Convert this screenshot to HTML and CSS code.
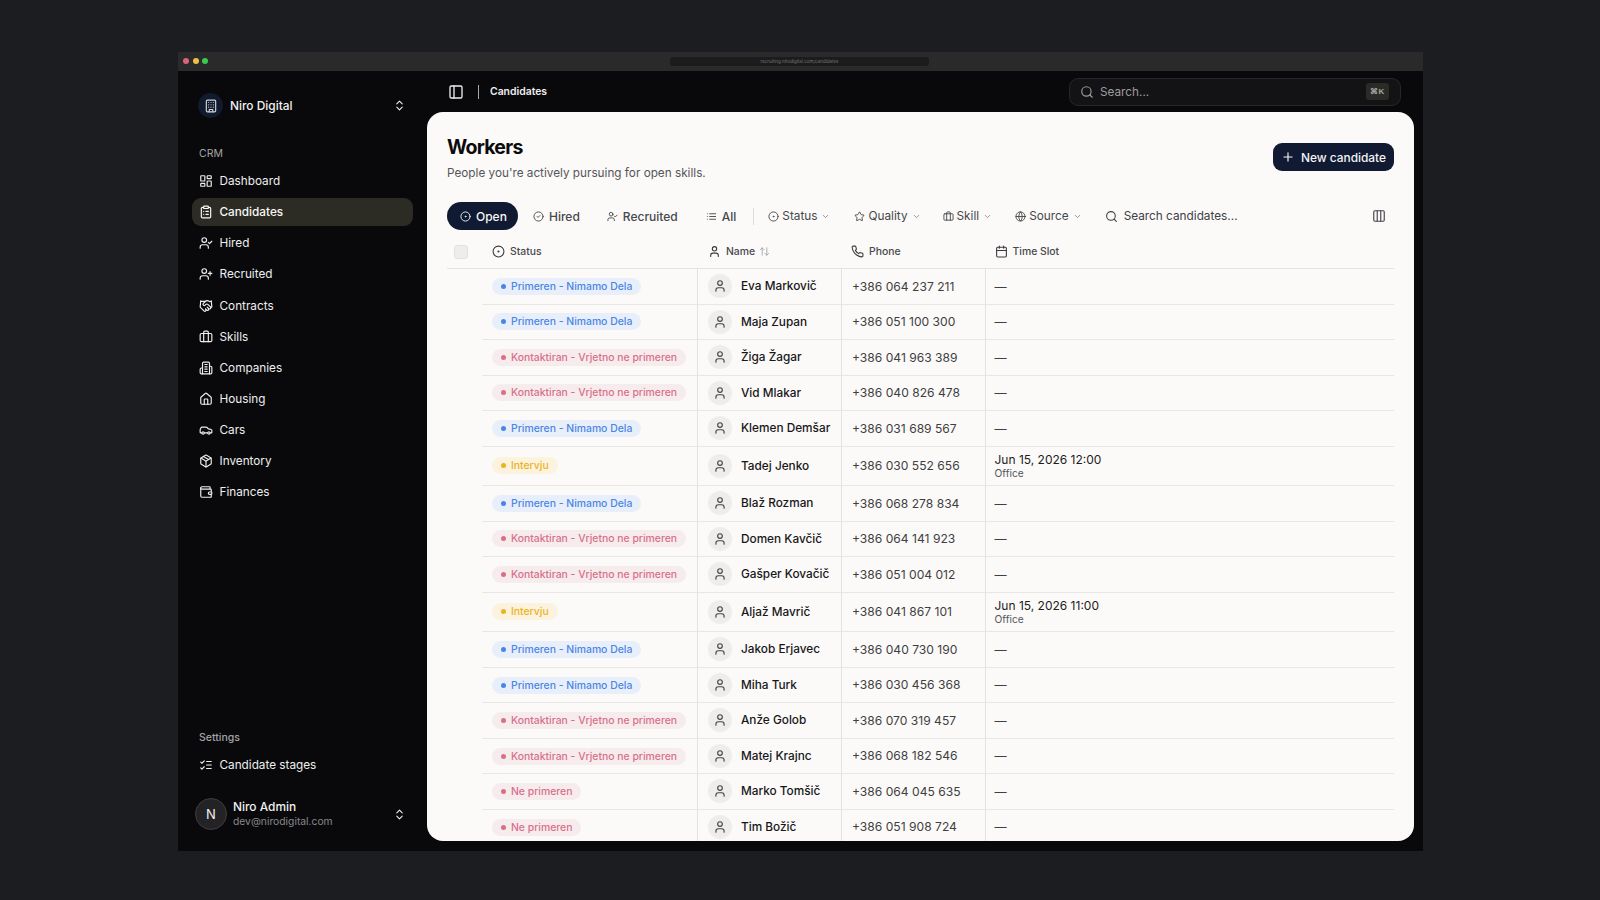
FILE: index.html

```html
<!DOCTYPE html>
<html lang="en">
<head>
  <meta charset="UTF-8" />
  <meta name="viewport" content="width=device-width, initial-scale=1.0"/>
  <title>Candidates</title>
  <link rel="stylesheet" href="styles.css">
</head>
<body>
  <svg class="icon-defs" aria-hidden="true">
    <symbol id="i-building" viewBox="0 0 24 24"><rect width="16" height="20" x="4" y="2" rx="2"/><path d="M9 22v-4h6v4M8 6h.01M16 6h.01M12 6h.01M12 10h.01M12 14h.01M16 10h.01M16 14h.01M8 10h.01M8 14h.01"/></symbol>
    <symbol id="i-updown" viewBox="0 0 24 24"><path d="m7 15 5 5 5-5"/><path d="m7 9 5-5 5 5"/></symbol>
    <symbol id="i-dashboard" viewBox="0 0 24 24"><rect width="7" height="9" x="3" y="3" rx="1"/><rect width="7" height="5" x="14" y="3" rx="1"/><rect width="7" height="9" x="14" y="12" rx="1"/><rect width="7" height="5" x="3" y="16" rx="1"/></symbol>
    <symbol id="i-clipboard" viewBox="0 0 24 24"><rect width="8" height="4" x="8" y="2" rx="1"/><path d="M16 4h2a2 2 0 0 1 2 2v14a2 2 0 0 1-2 2H6a2 2 0 0 1-2-2V6a2 2 0 0 1 2-2h2"/><path d="M12 11h4M12 16h4M8 11h.01M8 16h.01"/></symbol>
    <symbol id="i-usercheck" viewBox="0 0 24 24"><path d="M16 21v-2a4 4 0 0 0-4-4H6a4 4 0 0 0-4 4v2"/><circle cx="9" cy="7" r="4"/><path d="m16 11 2 2 4-4"/></symbol>
    <symbol id="i-userplus" viewBox="0 0 24 24"><path d="M16 21v-2a4 4 0 0 0-4-4H6a4 4 0 0 0-4 4v2"/><circle cx="9" cy="7" r="4"/><path d="M19 8v6M22 11h-6"/></symbol>
    <symbol id="i-handshake" viewBox="0 0 24 24"><path d="m11 17 2 2a1 1 0 1 0 3-3"/><path d="m14 14 2.5 2.5a1 1 0 1 0 3-3l-3.88-3.88a3 3 0 0 0-4.24 0l-.88.88a1 1 0 1 1-3-3l2.81-2.81a5.79 5.79 0 0 1 7.06-.87l.47.28a2 2 0 0 0 1.42.25L21 4"/><path d="m21 3 1 11h-2"/><path d="M3 3 2 14l6.5 6.5a1 1 0 1 0 3-3"/><path d="M3 4h8"/></symbol>
    <symbol id="i-briefcase" viewBox="0 0 24 24"><path d="M16 20V4a2 2 0 0 0-2-2h-4a2 2 0 0 0-2 2v16"/><rect width="20" height="14" x="2" y="6" rx="2"/></symbol>
    <symbol id="i-companies" viewBox="0 0 24 24"><path d="M6 22V4a2 2 0 0 1 2-2h8a2 2 0 0 1 2 2v18Z"/><path d="M6 12H4a2 2 0 0 0-2 2v6a2 2 0 0 0 2 2h2"/><path d="M18 9h2a2 2 0 0 1 2 2v9a2 2 0 0 1-2 2h-2"/><path d="M10 6h4M10 10h4M10 14h4M10 18h4"/></symbol>
    <symbol id="i-house" viewBox="0 0 24 24"><path d="M15 21v-8a1 1 0 0 0-1-1h-4a1 1 0 0 0-1 1v8"/><path d="M3 10a2 2 0 0 1 .709-1.528l7-5.999a2 2 0 0 1 2.582 0l7 5.999A2 2 0 0 1 21 10v9a2 2 0 0 1-2 2H5a2 2 0 0 1-2-2z"/></symbol>
    <symbol id="i-car" viewBox="0 0 24 24"><path d="M19 17h2c.6 0 1-.4 1-1v-3c0-.9-.7-1.7-1.5-1.9C18.7 10.6 16 10 16 10s-1.3-1.4-2.2-2.3c-.5-.4-1.1-.7-1.8-.7H5c-.6 0-1.1.4-1.4.9l-1.4 2.9A3.7 3.7 0 0 0 2 12v4c0 .6.4 1 1 1h2"/><circle cx="7" cy="17" r="2"/><path d="M9 17h6"/><circle cx="17" cy="17" r="2"/></symbol>
    <symbol id="i-package" viewBox="0 0 24 24"><path d="M11 21.73a2 2 0 0 0 2 0l7-4A2 2 0 0 0 21 16V8a2 2 0 0 0-1-1.73l-7-4a2 2 0 0 0-2 0l-7 4A2 2 0 0 0 3 8v8a2 2 0 0 0 1 1.73z"/><path d="M12 22V12"/><path d="m3.3 7 7.703 4.734a2 2 0 0 0 1.994 0L20.7 7"/><path d="m7.5 4.27 9 5.15"/></symbol>
    <symbol id="i-wallet" viewBox="0 0 24 24"><path d="M19 7V4a1 1 0 0 0-1-1H5a2 2 0 0 0 0 4h15a1 1 0 0 1 1 1v4h-3a2 2 0 0 0 0 4h3a1 1 0 0 0 1-1v-2a1 1 0 0 0-1-1"/><path d="M3 5v14a2 2 0 0 0 2 2h15a1 1 0 0 0 1-1v-4"/></symbol>
    <symbol id="i-listchecks" viewBox="0 0 24 24"><path d="m3 17 2 2 4-4"/><path d="m3 7 2 2 4-4"/><path d="M13 6h8M13 12h8M13 18h8"/></symbol>
    <symbol id="i-panel" viewBox="0 0 24 24"><rect width="18" height="18" x="3" y="3" rx="2"/><path d="M9 3v18"/></symbol>
    <symbol id="i-search" viewBox="0 0 24 24"><circle cx="11" cy="11" r="8"/><path d="m21 21-4.3-4.3"/></symbol>
    <symbol id="i-plus" viewBox="0 0 24 24"><path d="M5 12h14"/><path d="M12 5v14"/></symbol>
    <symbol id="i-circledot" viewBox="0 0 24 24"><circle cx="12" cy="12" r="10"/><circle cx="12" cy="12" r="1"/></symbol>
    <symbol id="i-circlecheck" viewBox="0 0 24 24"><circle cx="12" cy="12" r="10"/><path d="m9 12 2 2 4-4"/></symbol>
    <symbol id="i-list" viewBox="0 0 24 24"><path d="M3 12h.01M3 18h.01M3 6h.01M8 12h13M8 18h13M8 6h13"/></symbol>
    <symbol id="i-chevron" viewBox="0 0 24 24"><path d="m6 9 6 6 6-6"/></symbol>
    <symbol id="i-star" viewBox="0 0 24 24"><path d="M11.525 2.295a.53.53 0 0 1 .95 0l2.31 4.679a2.123 2.123 0 0 0 1.595 1.16l5.166.756a.53.53 0 0 1 .294.904l-3.736 3.638a2.123 2.123 0 0 0-.611 1.878l.882 5.14a.53.53 0 0 1-.771.56l-4.618-2.428a2.122 2.122 0 0 0-1.973 0L6.396 21.01a.53.53 0 0 1-.77-.56l.881-5.139a2.122 2.122 0 0 0-.611-1.879L2.16 9.795a.53.53 0 0 1 .294-.906l5.165-.755a2.122 2.122 0 0 0 1.597-1.16z"/></symbol>
    <symbol id="i-globe" viewBox="0 0 24 24"><circle cx="12" cy="12" r="10"/><path d="M12 2a14.5 14.5 0 0 0 0 20 14.5 14.5 0 0 0 0-20"/><path d="M2 12h20"/></symbol>
    <symbol id="i-columns" viewBox="0 0 24 24"><rect width="18" height="18" x="3" y="3" rx="2"/><path d="M9 3v18M15 3v18"/></symbol>
    <symbol id="i-user" viewBox="0 0 24 24"><path d="M19 21v-2a4 4 0 0 0-4-4H9a4 4 0 0 0-4 4v2"/><circle cx="12" cy="7" r="4"/></symbol>
    <symbol id="i-phone" viewBox="0 0 24 24"><path d="M22 16.92v3a2 2 0 0 1-2.18 2 19.79 19.79 0 0 1-8.63-3.07 19.5 19.5 0 0 1-6-6 19.79 19.79 0 0 1-3.07-8.67A2 2 0 0 1 4.11 2h3a2 2 0 0 1 2 1.72 12.84 12.84 0 0 0 .7 2.81 2 2 0 0 1-.45 2.11L8.09 9.91a16 16 0 0 0 6 6l1.27-1.27a2 2 0 0 1 2.11-.45 12.84 12.84 0 0 0 2.81.7A2 2 0 0 1 22 16.92z"/></symbol>
    <symbol id="i-calendar" viewBox="0 0 24 24"><path d="M8 2v4M16 2v4"/><rect width="18" height="18" x="3" y="4" rx="2"/><path d="M3 10h18"/></symbol>
    <symbol id="i-sort" viewBox="0 0 24 24"><path d="m21 16-4 4-4-4"/><path d="M17 20V4"/><path d="m3 8 4-4 4 4"/><path d="M7 4v16"/></symbol>
  </svg>

  <div class="window">
    <div class="titlebar">
      <div class="dots"><span class="dot red"></span><span class="dot yellow"></span><span class="dot green"></span></div>
      <div class="urlbar">recruiting.nirodigital.com/candidates</div>
    </div>

    <div class="app">
      <aside class="sidebar">
        <div class="brand">
          <span class="brand-logo"><svg class="ico"><use href="#i-building"/></svg></span>
          <span class="brand-name">Niro Digital</span>
          <svg class="ico updown"><use href="#i-updown"/></svg>
        </div>

        <div class="nav-label">CRM</div>
        <nav class="nav">
          <a class="nav-item"><svg class="ico"><use href="#i-dashboard"/></svg>Dashboard</a>
          <a class="nav-item active"><svg class="ico"><use href="#i-clipboard"/></svg>Candidates</a>
          <a class="nav-item"><svg class="ico"><use href="#i-usercheck"/></svg>Hired</a>
          <a class="nav-item"><svg class="ico"><use href="#i-userplus"/></svg>Recruited</a>
          <a class="nav-item"><svg class="ico"><use href="#i-handshake"/></svg>Contracts</a>
          <a class="nav-item"><svg class="ico"><use href="#i-briefcase"/></svg>Skills</a>
          <a class="nav-item"><svg class="ico"><use href="#i-companies"/></svg>Companies</a>
          <a class="nav-item"><svg class="ico"><use href="#i-house"/></svg>Housing</a>
          <a class="nav-item"><svg class="ico"><use href="#i-car"/></svg>Cars</a>
          <a class="nav-item"><svg class="ico"><use href="#i-package"/></svg>Inventory</a>
          <a class="nav-item"><svg class="ico"><use href="#i-wallet"/></svg>Finances</a>
        </nav>

        <div class="settings">
          <div class="nav-label settings-label">Settings</div>
          <a class="nav-item"><svg class="ico"><use href="#i-listchecks"/></svg>Candidate stages</a>
        </div>

        <div class="account">
          <span class="account-avatar">N</span>
          <span class="account-text">
            <span class="account-name">Niro Admin</span>
            <span class="account-mail">dev@nirodigital.com</span>
          </span>
          <svg class="ico updown"><use href="#i-updown"/></svg>
        </div>
      </aside>

      <main class="main">
        <header class="topbar">
          <svg class="ico panel-toggle"><use href="#i-panel"/></svg>
          <span class="topbar-sep"></span>
          <span class="crumb">Candidates</span>
          <div class="global-search">
            <svg class="ico"><use href="#i-search"/></svg>
            <span class="global-search-text">Search...</span>
            <kbd class="kbd">⌘K</kbd>
          </div>
        </header>

        <section class="panel">
          <div class="panel-head">
            <div>
              <h1 class="title">Workers</h1>
              <p class="subtitle">People you're actively pursuing for open skills.</p>
            </div>
            <button class="btn-new"><svg class="ico"><use href="#i-plus"/></svg>New candidate</button>
          </div>

          <div class="filters">
            <a class="tab tab-open"><svg class="ico"><use href="#i-circledot"/></svg>Open</a>
            <a class="tab tab-hired"><svg class="ico"><use href="#i-circlecheck"/></svg>Hired</a>
            <a class="tab tab-recruited"><svg class="ico"><use href="#i-usercheck"/></svg>Recruited</a>
            <a class="tab tab-all"><svg class="ico"><use href="#i-list"/></svg>All</a>
            <span class="filter-sep"></span>
            <a class="filter filter-status"><svg class="ico"><use href="#i-circledot"/></svg>Status<svg class="ico chev"><use href="#i-chevron"/></svg></a>
            <a class="filter filter-quality"><svg class="ico"><use href="#i-star"/></svg>Quality<svg class="ico chev"><use href="#i-chevron"/></svg></a>
            <a class="filter filter-skill"><svg class="ico"><use href="#i-briefcase"/></svg>Skill<svg class="ico chev"><use href="#i-chevron"/></svg></a>
            <a class="filter filter-source"><svg class="ico"><use href="#i-globe"/></svg>Source<svg class="ico chev"><use href="#i-chevron"/></svg></a>
            <span class="table-search"><svg class="ico"><use href="#i-search"/></svg>Search candidates...</span>
            <svg class="ico columns-btn"><use href="#i-columns"/></svg>
          </div>

          <table class="grid">
            <colgroup>
              <col class="col-check"><col class="col-status"><col class="col-name"><col class="col-phone"><col>
            </colgroup>
            <thead>
              <tr>
                <th><span class="checkbox"></span></th>
                <th><span class="th-in"><svg class="ico"><use href="#i-circledot"/></svg>Status</span></th>
                <th><span class="th-in"><svg class="ico"><use href="#i-user"/></svg>Name<svg class="ico sort"><use href="#i-sort"/></svg></span></th>
                <th><span class="th-in"><svg class="ico"><use href="#i-phone"/></svg>Phone</span></th>
                <th><span class="th-in"><svg class="ico"><use href="#i-calendar"/></svg>Time Slot</span></th>
              </tr>
            </thead>
            <tbody>
              <tr><td></td><td><span class="pill blue">Primeren - Nimamo Dela</span></td><td><span class="person"><span class="avatar"><svg class="ico"><use href="#i-user"/></svg></span>Eva Markovič</span></td><td>+386 064 237 211</td><td>—</td></tr>
              <tr><td></td><td><span class="pill blue">Primeren - Nimamo Dela</span></td><td><span class="person"><span class="avatar"><svg class="ico"><use href="#i-user"/></svg></span>Maja Zupan</span></td><td>+386 051 100 300</td><td>—</td></tr>
              <tr><td></td><td><span class="pill red">Kontaktiran - Vrjetno ne primeren</span></td><td><span class="person"><span class="avatar"><svg class="ico"><use href="#i-user"/></svg></span>Žiga Žagar</span></td><td>+386 041 963 389</td><td>—</td></tr>
              <tr><td></td><td><span class="pill red">Kontaktiran - Vrjetno ne primeren</span></td><td><span class="person"><span class="avatar"><svg class="ico"><use href="#i-user"/></svg></span>Vid Mlakar</span></td><td>+386 040 826 478</td><td>—</td></tr>
              <tr><td></td><td><span class="pill blue">Primeren - Nimamo Dela</span></td><td><span class="person"><span class="avatar"><svg class="ico"><use href="#i-user"/></svg></span>Klemen Demšar</span></td><td>+386 031 689 567</td><td>—</td></tr>
              <tr class="tall"><td></td><td><span class="pill yellow">Intervju</span></td><td><span class="person"><span class="avatar"><svg class="ico"><use href="#i-user"/></svg></span>Tadej Jenko</span></td><td>+386 030 552 656</td><td><span class="slot">Jun 15, 2026 12:00</span><span class="slot-place">Office</span></td></tr>
              <tr><td></td><td><span class="pill blue">Primeren - Nimamo Dela</span></td><td><span class="person"><span class="avatar"><svg class="ico"><use href="#i-user"/></svg></span>Blaž Rozman</span></td><td>+386 068 278 834</td><td>—</td></tr>
              <tr><td></td><td><span class="pill red">Kontaktiran - Vrjetno ne primeren</span></td><td><span class="person"><span class="avatar"><svg class="ico"><use href="#i-user"/></svg></span>Domen Kavčič</span></td><td>+386 064 141 923</td><td>—</td></tr>
              <tr><td></td><td><span class="pill red">Kontaktiran - Vrjetno ne primeren</span></td><td><span class="person"><span class="avatar"><svg class="ico"><use href="#i-user"/></svg></span>Gašper Kovačič</span></td><td>+386 051 004 012</td><td>—</td></tr>
              <tr class="tall"><td></td><td><span class="pill yellow">Intervju</span></td><td><span class="person"><span class="avatar"><svg class="ico"><use href="#i-user"/></svg></span>Aljaž Mavrič</span></td><td>+386 041 867 101</td><td><span class="slot">Jun 15, 2026 11:00</span><span class="slot-place">Office</span></td></tr>
              <tr><td></td><td><span class="pill blue">Primeren - Nimamo Dela</span></td><td><span class="person"><span class="avatar"><svg class="ico"><use href="#i-user"/></svg></span>Jakob Erjavec</span></td><td>+386 040 730 190</td><td>—</td></tr>
              <tr><td></td><td><span class="pill blue">Primeren - Nimamo Dela</span></td><td><span class="person"><span class="avatar"><svg class="ico"><use href="#i-user"/></svg></span>Miha Turk</span></td><td>+386 030 456 368</td><td>—</td></tr>
              <tr><td></td><td><span class="pill red">Kontaktiran - Vrjetno ne primeren</span></td><td><span class="person"><span class="avatar"><svg class="ico"><use href="#i-user"/></svg></span>Anže Golob</span></td><td>+386 070 319 457</td><td>—</td></tr>
              <tr><td></td><td><span class="pill red">Kontaktiran - Vrjetno ne primeren</span></td><td><span class="person"><span class="avatar"><svg class="ico"><use href="#i-user"/></svg></span>Matej Krajnc</span></td><td>+386 068 182 546</td><td>—</td></tr>
              <tr><td></td><td><span class="pill red">Ne primeren</span></td><td><span class="person"><span class="avatar"><svg class="ico"><use href="#i-user"/></svg></span>Marko Tomšič</span></td><td>+386 064 045 635</td><td>—</td></tr>
              <tr><td></td><td><span class="pill red">Ne primeren</span></td><td><span class="person"><span class="avatar"><svg class="ico"><use href="#i-user"/></svg></span>Tim Božič</span></td><td>+386 051 908 724</td><td>—</td></tr>
            </tbody>
          </table>
        </section>
      </main>
    </div>
  </div>
</body>
</html>
```

FILE: styles.css

```css
* {
  box-sizing: border-box;
}

html, body {
  height: 100%;
}

body {
  margin: 0;
  padding: 52px 0 0 178px;
  background-color: #1b1d21;
  font-family: Inter, "Liberation Sans", sans-serif;
  overflow: hidden;
}

.icon-defs {
  position: absolute;
  width: 0;
  height: 0;
}

.ico {
  width: 14px;
  height: 14px;
  flex: none;
  fill: none;
  stroke: currentColor;
  stroke-width: 2;
  stroke-linecap: round;
  stroke-linejoin: round;
}

/* window chrome */

.window {
  width: 1245px;
  height: 799px;
  display: flex;
  flex-direction: column;
  background-color: #09090b;
}

.titlebar {
  height: 19px;
  flex: none;
  display: flex;
  align-items: center;
  justify-content: center;
  position: relative;
  background-color: #2a2a2a;
}

.dots {
  position: absolute;
  left: 5px;
  top: 6px;
  display: flex;
  gap: 3.5px;
}

.dot {
  width: 6px;
  height: 6px;
  border-radius: 50%;
}

.dot.red { background-color: #d9637a; }
.dot.yellow { background-color: #eec042; }
.dot.green { background-color: #3cc94f; }

.urlbar {
  width: 259px;
  height: 9px;
  margin-left: -2px;
  border-radius: 3px;
  background-color: #1c1c1c;
  color: #77777a;
  font-size: 4.5px;
  line-height: 9px;
  text-align: center;
}

.app {
  flex: 1;
  display: flex;
  min-height: 0;
}

/* sidebar */

.sidebar {
  width: 249px;
  flex: none;
  padding: 0 14px;
  display: flex;
  flex-direction: column;
  color: #f1f1f1;
}

.brand {
  height: 25px;
  margin-top: 22px;
  padding-left: 6px;
  display: flex;
  align-items: center;
}

.brand-logo {
  width: 25px;
  height: 25px;
  border-radius: 50%;
  background-color: #121a2e;
  display: flex;
  align-items: center;
  justify-content: center;
  color: #cfd2d8;
}

.brand-name {
  margin-left: 7px;
  font-size: 11.9px;
  font-weight: 500;
}

.updown {
  width: 13px;
  height: 13px;
  margin-left: auto;
  margin-right: 7.5px;
}

.nav-label {
  margin-top: 28.5px;
  padding-left: 7px;
  height: 14px;
  font-size: 10.5px;
  line-height: 14px;
  color: #a3a3a6;
}

.nav {
  margin-top: 6.5px;
  display: flex;
  flex-direction: column;
  gap: 3.15px;
}

.nav-item {
  height: 28px;
  padding-left: 7px;
  display: flex;
  align-items: center;
  gap: 6.5px;
  border-radius: 9px;
  font-size: 11.75px;
  color: #eeeeee;
}

.nav-item.active {
  background-color: #2d2c24;
  font-weight: 500;
  color: #f7f7f5;
}

.settings {
  margin-top: auto;
}

.settings-label {
  margin-top: 0;
  margin-bottom: 6px;
  font-weight: 500;
}

.account {
  margin: 19px 0 21px;
  padding-left: 3px;
  display: flex;
  align-items: center;
}

.account-avatar {
  width: 32px;
  height: 32px;
  flex: none;
  border-radius: 50%;
  background-color: #232325;
  border: 1px solid #3d3d40;
  display: flex;
  align-items: center;
  justify-content: center;
  font-size: 13px;
  color: #f0f0f0;
}

.account-text {
  margin-left: 6px;
  display: flex;
  flex-direction: column;
  gap: 1px;
}

.account-name {
  font-size: 11.9px;
  font-weight: 500;
  line-height: 14px;
}

.account-mail {
  font-size: 10.3px;
  line-height: 13px;
  color: #87878a;
}

/* top bar */

.main {
  flex: 1;
  min-width: 0;
  display: flex;
  flex-direction: column;
  padding: 0 9px 10px 0;
}

.topbar {
  height: 41px;
  flex: none;
  display: flex;
  align-items: center;
  color: #eeeeee;
}

.panel-toggle {
  margin-left: 21px;
  width: 16px;
  height: 16px;
}

.topbar-sep {
  width: 1px;
  height: 14px;
  margin-left: 14px;
  background-color: #a8a8a8;
}

.crumb {
  margin-left: 11px;
  font-size: 10.4px;
  font-weight: 600;
}

.global-search {
  width: 332px;
  height: 28px;
  margin-left: auto;
  margin-right: 13px;
  padding: 0 11px 0 10px;
  display: flex;
  align-items: center;
  gap: 6px;
  border: 1px solid #27272a;
  border-radius: 9px;
  background-color: #131315;
  color: #9c9c9f;
}

.global-search-text {
  font-size: 11.75px;
}

.kbd {
  margin-left: auto;
  width: 23px;
  height: 17px;
  border-radius: 3px;
  background-color: #2a2b27;
  color: #a5a5a5;
  font-family: "Liberation Sans", sans-serif;
  font-size: 8px;
  font-weight: 700;
  letter-spacing: 1px;
  line-height: 17px;
  text-align: center;
}

/* panel */

.panel {
  flex: 1;
  min-height: 0;
  padding: 0 20px;
  overflow: hidden;
  border-radius: 16px;
  background-color: #fbfaf8;
  color: #111114;
}

.panel-head {
  height: 76px;
  padding-top: 23px;
  display: flex;
  justify-content: space-between;
  align-items: flex-start;
}

.title {
  margin: 0;
  font-size: 19.5px;
  font-weight: 700;
  line-height: 25px;
  letter-spacing: -0.75px;
  color: #0b0b0e;
}

.subtitle {
  margin: 5px 0 0;
  font-size: 11.75px;
  line-height: 16px;
  color: #55555a;
}

.btn-new {
  width: 121px;
  height: 28px;
  margin-top: 8px;
  padding: 0;
  border: none;
  border-radius: 9px;
  background-color: #101a33;
  color: #f5f5f5;
  font-family: inherit;
  font-size: 11.9px;
  font-weight: 500;
  display: flex;
  align-items: center;
  justify-content: center;
  gap: 6px;
}

/* filter row */

.filters {
  height: 28px;
  margin-top: 14px;
  display: flex;
  align-items: center;
  font-size: 11.8px;
  color: #47474c;
}

.filters .ico {
  width: 11px;
  height: 11px;
}

.tab, .filter, .table-search {
  display: flex;
  align-items: center;
}

.tab {
  gap: 5px;
  font-size: 12px;
  font-weight: 500;
}

.tab-open {
  width: 71px;
  height: 28px;
  padding-left: 13px;
  border-radius: 14px;
  background-color: #101a33;
  color: #f7f7f7;
}

.tab-hired { margin-left: 15px; }
.tab-recruited { margin-left: 27px; }
.tab-all { margin-left: 28px; }

.filter-sep {
  width: 1px;
  height: 17px;
  margin: 0 14px 0 17px;
  background-color: #dddcda;
}

.filter {
  gap: 3px;
  font-weight: 400;
}

.filters .chev {
  width: 9px;
  height: 9px;
  margin-left: 1px;
  color: #77777c;
}

.filter-quality { margin-left: 24px; }
.filter-skill { margin-left: 22px; }
.filter-source { margin-left: 23px; }

.table-search {
  margin-left: 23px;
  gap: 6px;
  color: #404045;
}

.filters .table-search .ico {
  width: 13px;
  height: 13px;
}

.filters .columns-btn {
  width: 14px;
  height: 14px;
  margin-left: auto;
  margin-right: 8px;
}

/* table */

.grid {
  width: 100%;
  margin-top: 5px;
  table-layout: fixed;
  border-collapse: separate;
  border-spacing: 0;
  font-size: 12.1px;
}

.col-check { width: 35px; }
.col-status { width: 216px; }
.col-name { width: 144px; }
.col-phone { width: 144px; }

.grid th {
  height: 34px;
  padding: 0 0 0 10px;
  border-bottom: 1px solid #e4e3e1;
  text-align: left;
  font-size: 10.4px;
  font-weight: 500;
  color: #48484d;
}

.grid th:first-child {
  padding-left: 7px;
}

.grid th:nth-child(4) {
  padding-left: 9px;
}

.grid th:last-child {
  padding-left: 8.5px;
}

.th-in {
  display: flex;
  align-items: center;
  gap: 5px;
}

.th-in .ico {
  width: 13px;
  height: 13px;
  color: #3a3a3f;
}

.th-in .sort {
  width: 11px;
  height: 11px;
  margin-left: -1px;
  color: #a9a9ad;
}

.checkbox {
  display: block;
  width: 14px;
  height: 14px;
  border: 1px solid #e3e2e0;
  border-radius: 3px;
  background-color: #eeedeb;
}

.grid td {
  height: 35.5px;
  padding: 0 0 0 10px;
  border-bottom: 1px solid #e8e7e5;
  border-right: 1px solid #e4e3e1;
  color: #3e3e43;
  vertical-align: middle;
}

.grid td:first-child {
  padding: 0;
  border: none;
  border-bottom: none;
}

.grid td:last-child {
  padding-left: 8.5px;
  border-right: none;
}

.grid tr.tall td {
  height: 39.6px;
}

.pill {
  display: inline-flex;
  align-items: center;
  height: 17px;
  padding: 0 9px;
  gap: 5px;
  border-radius: 9px;
  font-size: 10.4px;
  font-weight: 500;
  vertical-align: middle;
}

.pill::before {
  content: "";
  width: 5px;
  height: 5px;
  border-radius: 50%;
  background-color: currentColor;
}

.pill.blue { background-color: #e9effa; color: #4a86e6; }
.pill.red { background-color: #f6ecee; color: #d9708a; }
.pill.yellow { background-color: #fbf3de; color: #ecb21f; }

.person {
  display: flex;
  align-items: center;
  gap: 9px;
  font-size: 11.8px;
  font-weight: 500;
  color: #17171a;
}

.avatar {
  width: 24px;
  height: 24px;
  flex: none;
  border-radius: 50%;
  background-color: #eeedeb;
  color: #47474c;
  display: flex;
  align-items: center;
  justify-content: center;
}

.avatar .ico {
  width: 14px;
  height: 14px;
}

.slot, .slot-place {
  display: block;
}

.slot {
  font-size: 12px;
  line-height: 14px;
  color: #1c1c20;
}

.slot-place {
  font-size: 10.2px;
  line-height: 12px;
  color: #55555a;
}
```
